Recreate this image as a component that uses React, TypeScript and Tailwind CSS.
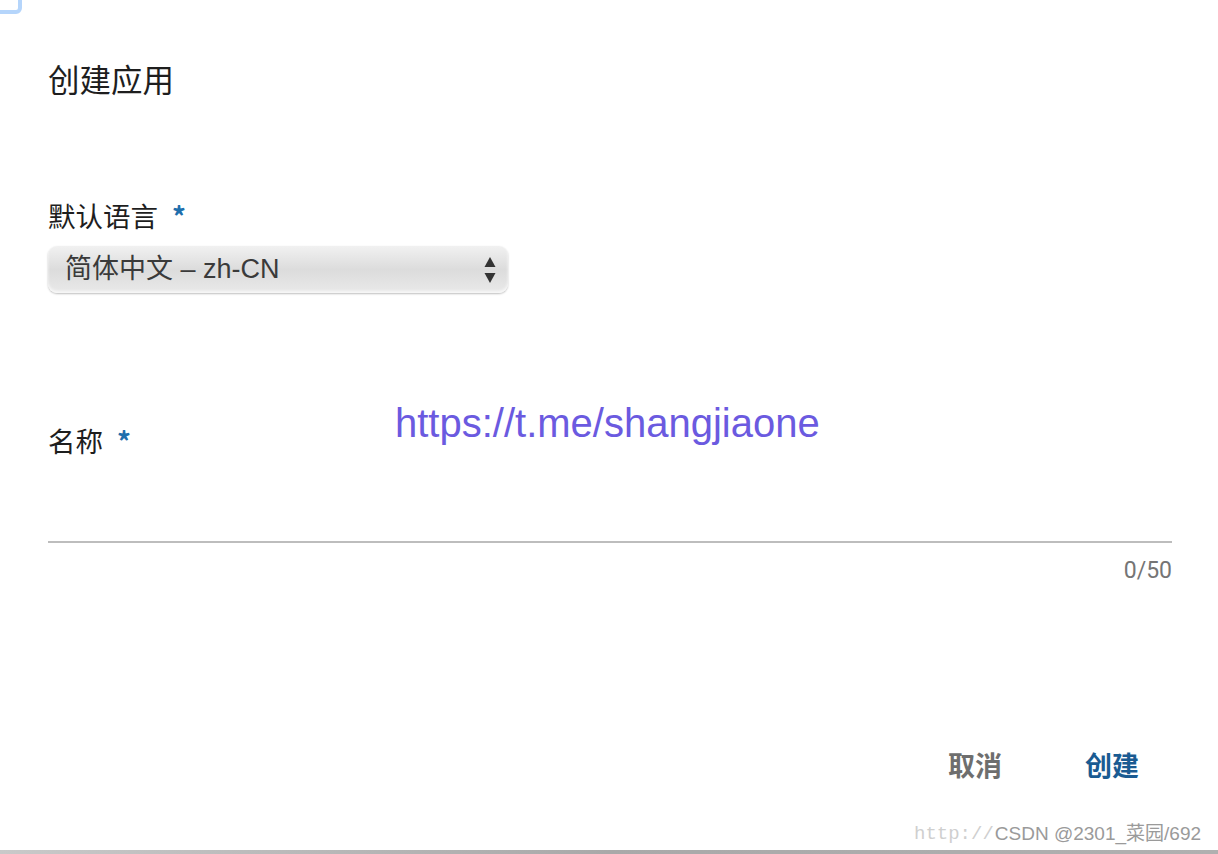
import React from "react";

const cjk = { fontFamily: '"Noto Sans CJK SC", "Noto Sans", sans-serif' };

export default function App() {
  return (
    <div className="relative w-[1218px] h-[854px] bg-white overflow-hidden" style={cjk}>
      <div className="absolute left-[-20px] top-[-20px] w-[42px] h-[34px] rounded-[6px] border-[4px] border-[#b5d5fb]" />

      <div className="flex flex-col pl-[48px] pr-[46px] pt-[60px]">
        <h1 className="text-[31.5px] leading-[36px] text-[#1e1e1e] font-normal">创建应用</h1>

        <div className="mt-[101px] flex items-center text-[27.5px] leading-[36px] text-[#1e1e1e]">
          <span>默认语言</span>
          <span className="ml-[14px] text-[#1f6fad] font-bold">*</span>
        </div>

        <div className="mt-[13px] w-[460px] h-[47px] rounded-[9px] bg-gradient-to-b from-[#f1f1f1] via-[#dcdcdc] to-[#e9e9e9] shadow-[0_1px_2px_rgba(0,0,0,0.25),inset_0_-2px_3px_rgba(255,255,255,0.7)] flex items-center justify-between pl-[17px] pr-[12px]">
          <span className="text-[27px] leading-none text-[#3a3a3a]" style={{ fontFamily: '"Liberation Sans", "Noto Sans CJK SC", sans-serif' }}>简体中文 – zh-CN</span>
          <svg width="12" height="28" viewBox="0 0 12 28">
            <path d="M6 1 L11.5 11 L0.5 11 Z" fill="#333" />
            <path d="M6 27 L11.5 17 L0.5 17 Z" fill="#333" />
          </svg>
        </div>

        <div className="mt-[129px] flex items-center text-[27.5px] leading-[36px] text-[#1e1e1e]">
          <span>名称</span>
          <span className="ml-[14px] text-[#1f6fad] font-bold">*</span>
        </div>

        <div className="h-[85px] border-b-2 border-[#bdbdbd]" />

        <div className="mt-[14px] text-right text-[23px] leading-[28px] text-[#757575]" style={{ fontFamily: 'Roboto, "Noto Sans", sans-serif' }}>
          0/50
        </div>

        <div className="mt-[162px] flex justify-end gap-[83px] pr-[33px] text-[27px] leading-[36px] font-bold">
          <span className="text-[#6e6e6e]">取消</span>
          <span className="text-[#1a5b92]">创建</span>
        </div>
      </div>

      <div className="absolute left-[395px] top-[400px] text-[40px] leading-[46px] text-[#6b5ae0]" style={{ fontFamily: '"Liberation Sans", Arial, sans-serif' }}>
        https://t.me/shangjiaone
      </div>

      <div className="absolute left-[914px] top-[822px] flex items-center text-[19px] leading-[24px] whitespace-nowrap">
        <span className="text-[#cfcfcf]" style={{ fontFamily: '"Liberation Mono", monospace' }}>http://</span>
        <span className="ml-[1px] text-[#9a9a9a]" style={{ fontFamily: '"Liberation Sans", "Noto Sans CJK SC", sans-serif' }}>CSDN @2301_菜园/692</span>
      </div>

      <div className="absolute left-0 right-0 bottom-0 h-[4px] bg-gradient-to-r from-[#c9c9c9] via-[#a9a9a9] to-[#b0b0b0]" />
    </div>
  );
}
